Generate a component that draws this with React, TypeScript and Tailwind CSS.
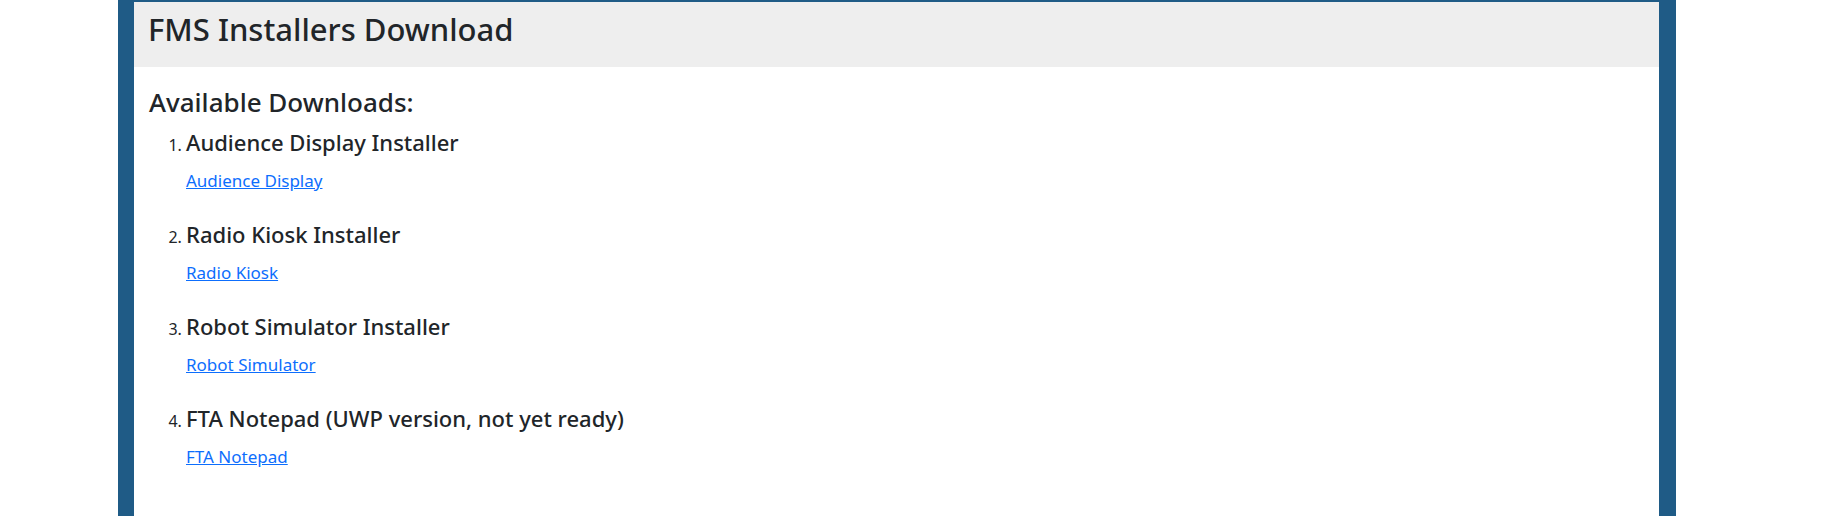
import React from "react";

const items = [
  { title: "Audience Display Installer", link: "Audience Display" },
  { title: "Radio Kiosk Installer", link: "Radio Kiosk" },
  { title: "Robot Simulator Installer", link: "Robot Simulator" },
  { title: "FTA Notepad (UWP version, not yet ready)", link: "FTA Notepad" },
];

export default function App() {
  return (
    <div className="w-[1824px] h-[516px] bg-white overflow-hidden" style={{ fontFamily: '"Noto Sans", "Open Sans", sans-serif' }}>
      <div className="ml-[118px] w-[1558px] h-[516px] border-l-[16px] border-r-[17px] border-t-2 border-[#1f5b86] bg-white text-[#212529]">
        <div className="h-[65px] bg-[#eeeeee] px-[14px] pt-[9px]">
          <h2 className="text-[31px] leading-[36px] font-medium">FMS Installers Download</h2>
        </div>
        <div className="px-[15px] pt-[20px]">
          <h4 className="text-[26px] leading-[30px] font-medium">Available Downloads:</h4>
          <ol className="list-decimal list-outside pl-[37px] mt-[13px] text-[16px]">
            {items.map((it) => (
              <li key={it.title} className="mb-[31px]">
                <h5 className="text-[22px] leading-[24px] font-medium">{it.title}</h5>
                <a href="#" className="block mt-[17px] text-[17px] leading-[20px] text-[#0d6efd] underline">
                  {it.link}
                </a>
              </li>
            ))}
          </ol>
        </div>
      </div>
    </div>
  );
}
